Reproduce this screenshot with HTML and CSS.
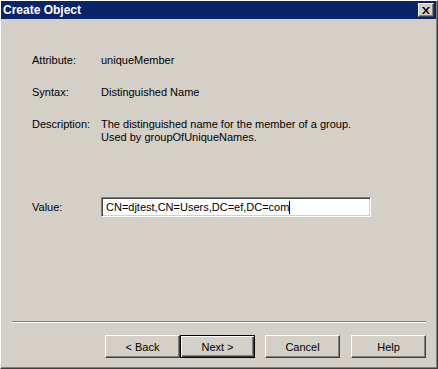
FILE: index.html
```html
<!DOCTYPE html>
<html lang="en">
<head>
  <meta charset="UTF-8">
  <meta name="viewport" content="width=device-width, initial-scale=1.0">
  <title>Create Object</title>
  <link rel="stylesheet" href="styles.css">
</head>
<body>
  <div class="window">
    <div class="titlebar">
      <span class="title">Create Object</span>
      <button class="close-btn" aria-label="Close">
        <svg width="8" height="7" viewBox="0 0 8 7">
          <path d="M0 0h2l2 2.5 2-2.5h2l-3 3.5 3 3.5h-2l-2-2.5-2 2.5h-2l3-3.5z" fill="#000"/>
        </svg>
      </button>
    </div>

    <div class="content">
      <div class="row">
        <span class="label">Attribute:</span>
        <span class="value">uniqueMember</span>
      </div>
      <div class="row">
        <span class="label">Syntax:</span>
        <span class="value">Distinguished Name</span>
      </div>
      <div class="row">
        <span class="label">Description:</span>
        <span class="value">The distinguished name for the member of a group.<br>Used by groupOfUniqueNames.</span>
      </div>

      <div class="row value-row">
        <span class="label">Value:</span>
        <div class="textbox">CN=djtest,CN=Users,DC=ef,DC=com<span class="caret"></span></div>
      </div>
    </div>

    <div class="footer">
      <div class="separator"></div>
      <div class="buttons">
        <button class="button">&lt; Back</button>
        <button class="button default">Next &gt;</button>
        <button class="button cancel">Cancel</button>
        <button class="button help">Help</button>
      </div>
    </div>
  </div>
</body>
</html>
```

FILE: styles.css
```css
html,
body {
  margin: 0;
  padding: 0;
}

body {
  font-family: "Liberation Sans", Arial, sans-serif;
  font-size: 11px;
  color: #000;
  background-color: #d4d0c8;
}

.window {
  width: 438px;
  height: 369px;
  box-sizing: border-box;
  display: flex;
  flex-direction: column;
  background-color: #d4d0c8;
  border-top: 1px solid #ffffff;
  border-left: 1px solid #ffffff;
  border-right: 1px solid #404040;
  border-bottom: 1px solid #404040;
  box-shadow: inset -1px -1px 0 #808080;
}

.titlebar {
  height: 18px;
  margin-right: 1px;
  display: flex;
  align-items: center;
  justify-content: space-between;
  background-color: #0a246a;
  padding: 0 2px 0 2px;
}

.title {
  color: #fff;
  font-weight: bold;
  font-size: 12px;
}

.close-btn {
  width: 16px;
  height: 14px;
  padding: 0;
  display: flex;
  align-items: center;
  justify-content: center;
  background-color: #d4d0c8;
  border: 1px solid;
  border-color: #ffffff #404040 #404040 #ffffff;
  box-shadow: inset -1px -1px 0 #808080;
}

.content {
  display: flex;
  flex-direction: column;
  padding: 35px 0 0 31px;
}

.row {
  display: flex;
  line-height: 13px;
  margin-bottom: 19px;
}

.label {
  width: 69px;
  flex-shrink: 0;
}

.value-row {
  align-items: center;
  margin-top: 34px;
  margin-bottom: 0;
}

.textbox {
  width: 270px;
  height: 20px;
  box-sizing: border-box;
  display: flex;
  align-items: center;
  padding-left: 4px;
  background-color: #fff;
  border: 1px solid;
  border-color: #808080 #ffffff #ffffff #808080;
  box-shadow: inset 1px 1px 0 #404040, inset -1px -1px 0 #d4d0c8;
}

.caret {
  display: inline-block;
  width: 1px;
  height: 13px;
  background-color: #000;
}

.footer {
  margin-top: auto;
  padding: 0 11px 10px 11px;
}

.separator {
  border-top: 1px solid #808080;
  border-bottom: 1px solid #ffffff;
  margin-bottom: 12px;
}

.buttons {
  display: flex;
  justify-content: flex-end;
}

.button {
  width: 75px;
  height: 23px;
  padding: 0;
  font-family: "Liberation Sans", Arial, sans-serif;
  font-size: 11px;
  color: #000;
  background-color: #d4d0c8;
  border: 1px solid;
  border-color: #ffffff #404040 #404040 #ffffff;
  box-shadow: inset -1px -1px 0 #808080;
}

.button.default {
  border: 1px solid #000;
  box-shadow: inset 1px 1px 0 #ffffff, inset -1px -1px 0 #404040, inset -2px -2px 0 #808080;
}

.button.cancel {
  margin-left: 10px;
}

.button.help {
  margin-left: 11px;
}
```
